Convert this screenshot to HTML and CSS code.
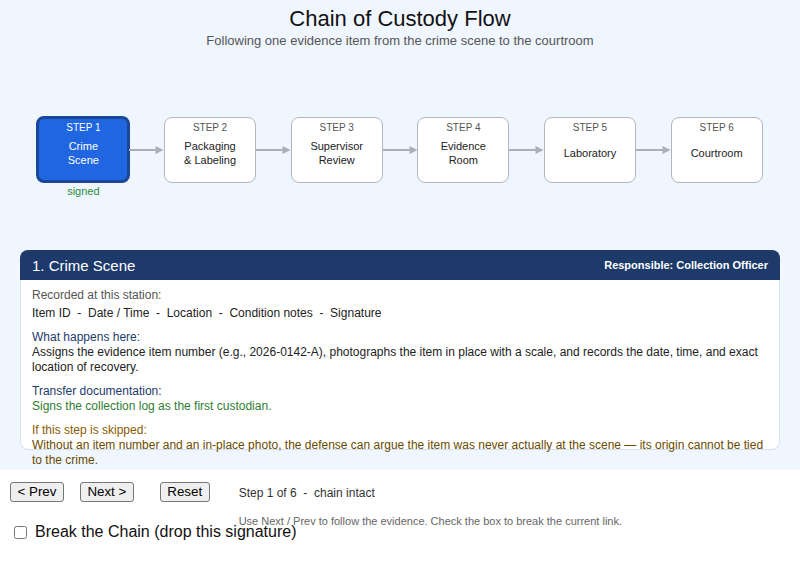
FILE: index.html
```html
<!DOCTYPE html>
<html lang="en">
<head>
<meta charset="utf-8">
<title>Chain of Custody Flow</title>
<link rel="stylesheet" href="styles.css">
</head>
<body>
<div class="stage">
  <h1 class="title">Chain of Custody Flow</h1>
  <p class="subtitle">Following one evidence item from the crime scene to the courtroom</p>

  <div class="flow">
    <div class="step active">
      <div class="box"><div class="step-no">STEP 1</div><div class="step-name">Crime<br>Scene</div></div>
      <div class="step-status">signed</div>
    </div>
    <svg class="arrow" viewBox="0 0 34.67 66" aria-hidden="true"><line x1="0" y1="33" x2="27" y2="33"/><polygon points="26.5,29 34.67,33 26.5,37"/></svg>
    <div class="step">
      <div class="box"><div class="step-no">STEP 2</div><div class="step-name">Packaging<br>&amp; Labeling</div></div>
      <div class="step-status"></div>
    </div>
    <svg class="arrow" viewBox="0 0 34.67 66" aria-hidden="true"><line x1="0" y1="33" x2="27" y2="33"/><polygon points="26.5,29 34.67,33 26.5,37"/></svg>
    <div class="step">
      <div class="box"><div class="step-no">STEP 3</div><div class="step-name">Supervisor<br>Review</div></div>
      <div class="step-status"></div>
    </div>
    <svg class="arrow" viewBox="0 0 34.67 66" aria-hidden="true"><line x1="0" y1="33" x2="27" y2="33"/><polygon points="26.5,29 34.67,33 26.5,37"/></svg>
    <div class="step">
      <div class="box"><div class="step-no">STEP 4</div><div class="step-name">Evidence<br>Room</div></div>
      <div class="step-status"></div>
    </div>
    <svg class="arrow" viewBox="0 0 34.67 66" aria-hidden="true"><line x1="0" y1="33" x2="27" y2="33"/><polygon points="26.5,29 34.67,33 26.5,37"/></svg>
    <div class="step">
      <div class="box"><div class="step-no">STEP 5</div><div class="step-name">Laboratory</div></div>
      <div class="step-status"></div>
    </div>
    <svg class="arrow" viewBox="0 0 34.67 66" aria-hidden="true"><line x1="0" y1="33" x2="27" y2="33"/><polygon points="26.5,29 34.67,33 26.5,37"/></svg>
    <div class="step">
      <div class="box"><div class="step-no">STEP 6</div><div class="step-name">Courtroom</div></div>
      <div class="step-status"></div>
    </div>
  </div>

  <section class="card">
    <header class="card-head">
      <h2 class="card-title">1. Crime Scene</h2>
      <span class="card-role">Responsible: Collection Officer</span>
    </header>
    <div class="card-body">
      <div class="sec sec-first">
        <div class="label label-gray">Recorded at this station:</div>
        <div class="fields">Item ID &nbsp;-&nbsp; Date / Time &nbsp;-&nbsp; Location &nbsp;-&nbsp; Condition notes &nbsp;-&nbsp; Signature</div>
      </div>
      <div class="sec">
        <div class="label label-navy">What happens here:</div>
        <div class="text">Assigns the evidence item number (e.g., 2026-0142-A), photographs the item in place with a scale, and records the date, time, and exact location of recovery.</div>
      </div>
      <div class="sec">
        <div class="label label-navy">Transfer documentation:</div>
        <div class="text text-green">Signs the collection log as the first custodian.</div>
      </div>
      <div class="sec">
        <div class="label label-brown">If this step is skipped:</div>
        <div class="text text-brown">Without an item number and an in-place photo, the defense can argue the item was never actually at the scene — its origin cannot be tied to the crime.</div>
      </div>
    </div>
  </section>
</div>

<div class="controls">
  <button class="btn btn-prev" type="button">&lt; Prev</button>
  <button class="btn btn-next" type="button">Next &gt;</button>
  <button class="btn btn-reset" type="button">Reset</button>
  <div class="info">
    <div class="info-status">Step 1 of 6 &nbsp;-&nbsp; chain intact</div>
    <div class="info-help">Use Next / Prev to follow the evidence. Check the box to break the current link.</div>
  </div>
</div>

<label class="break"><input type="checkbox" class="break-box"><span>Break the Chain (drop this signature)</span></label>
</body>
</html>
```

FILE: styles.css
```css
* { box-sizing: border-box; }

html, body {
  margin: 0;
  padding: 0;
  background: #ffffff;
  font-family: "Liberation Sans", Arial, Helvetica, sans-serif;
  color: #222;
}

.stage {
  background: #eff6ff;
  height: 470px;
  padding: 6px 20px 20px;
}

.title {
  margin: 0;
  font-size: 22px;
  font-weight: normal;
  line-height: 25px;
  text-align: center;
  color: #111;
}

.subtitle {
  margin: 2px 0 0;
  font-size: 13px;
  line-height: 15px;
  text-align: center;
  color: #555;
}

.flow {
  margin-top: 69px;
  display: flex;
  justify-content: center;
  align-items: flex-start;
}

.step {
  width: 92px;
  display: flex;
  flex-direction: column;
  align-items: center;
}

.box {
  width: 92px;
  height: 66px;
  background: #fff;
  border: 1px solid #b3b7bd;
  border-radius: 8px;
  padding-top: 4px;
  display: flex;
  flex-direction: column;
  align-items: center;
  text-align: center;
}

.step-no {
  font-size: 10px;
  line-height: 12px;
  color: #555;
}

.step-name {
  margin-top: 5px;
  height: 28px;
  display: flex;
  align-items: center;
  font-size: 11px;
  line-height: 14px;
  color: #222;
}

.step.active .box {
  width: 94px;
  height: 67px;
  margin-top: -1px;
  background: #1f66e0;
  border: 3px solid #1b4799;
  padding-top: 3px;
}

.step.active .step-no { color: #fff; }
.step.active .step-name { color: #fff; }

.step-status {
  margin-top: 2px;
  height: 13px;
  font-size: 11px;
  line-height: 13px;
  color: #2e8b3a;
}

.arrow {
  width: 34.67px;
  height: 66px;
  flex: none;
}
.arrow line { stroke: #aab0b8; stroke-width: 2; }
.arrow polygon { fill: #aab0b8; }

.card {
  margin-top: 52px;
}

.card-head {
  height: 30px;
  background: #1d3a6b;
  border-radius: 8px 8px 0 0;
  padding: 0 12px;
  display: flex;
  align-items: center;
  justify-content: space-between;
  color: #fff;
}

.card-title {
  margin: 0;
  font-size: 15px;
  font-weight: normal;
}

.card-role {
  font-size: 11px;
  font-weight: bold;
}

.card-body {
  height: 170px;
  background: #fff;
  border: 1px solid #d3e0f0;
  border-top: none;
  border-radius: 0 0 8px 8px;
  padding: 8px 11px 0;
  font-size: 12px;
  line-height: 15px;
}

.sec { margin-top: 9px; }
.sec-first { margin-top: 0; }

.label-gray { color: #555; }
.label-navy { color: #1d3a6b; }
.label-brown { color: #8a5a00; }

.fields { margin-top: 3px; color: #222; }
.text { color: #222; }
.text-green { color: #2e7d32; }
.text-brown { color: #6b4a00; }

.controls {
  height: 53px;
  padding: 12px 10px 0;
  display: flex;
  align-items: flex-start;
}

.btn {
  height: 20px;
  padding: 0 6.5px;
  font-family: "Liberation Sans", Arial, sans-serif;
  font-size: 13.33px;
  color: #000;
  background: #efefef;
  border: 1px solid #767676;
  border-radius: 3px;
  line-height: 18px;
}

.btn-prev { margin-right: 16px; }
.btn-next { margin-right: 26px; }
.btn-reset { margin-right: 29px; }

.info { padding-top: 4px; }

.info-status {
  font-size: 12px;
  line-height: 15px;
  color: #333;
}

.info-help {
  margin-top: 13.5px;
  font-size: 11px;
  line-height: 13px;
  color: #666;
}

.break {
  display: flex;
  align-items: center;
  height: 18px;
  padding-left: 10px;
  font-size: 16px;
  line-height: 18px;
  color: #111;
}

.break-box {
  width: 13px;
  height: 13px;
  margin: 0 8px 0 4px;
}
```
